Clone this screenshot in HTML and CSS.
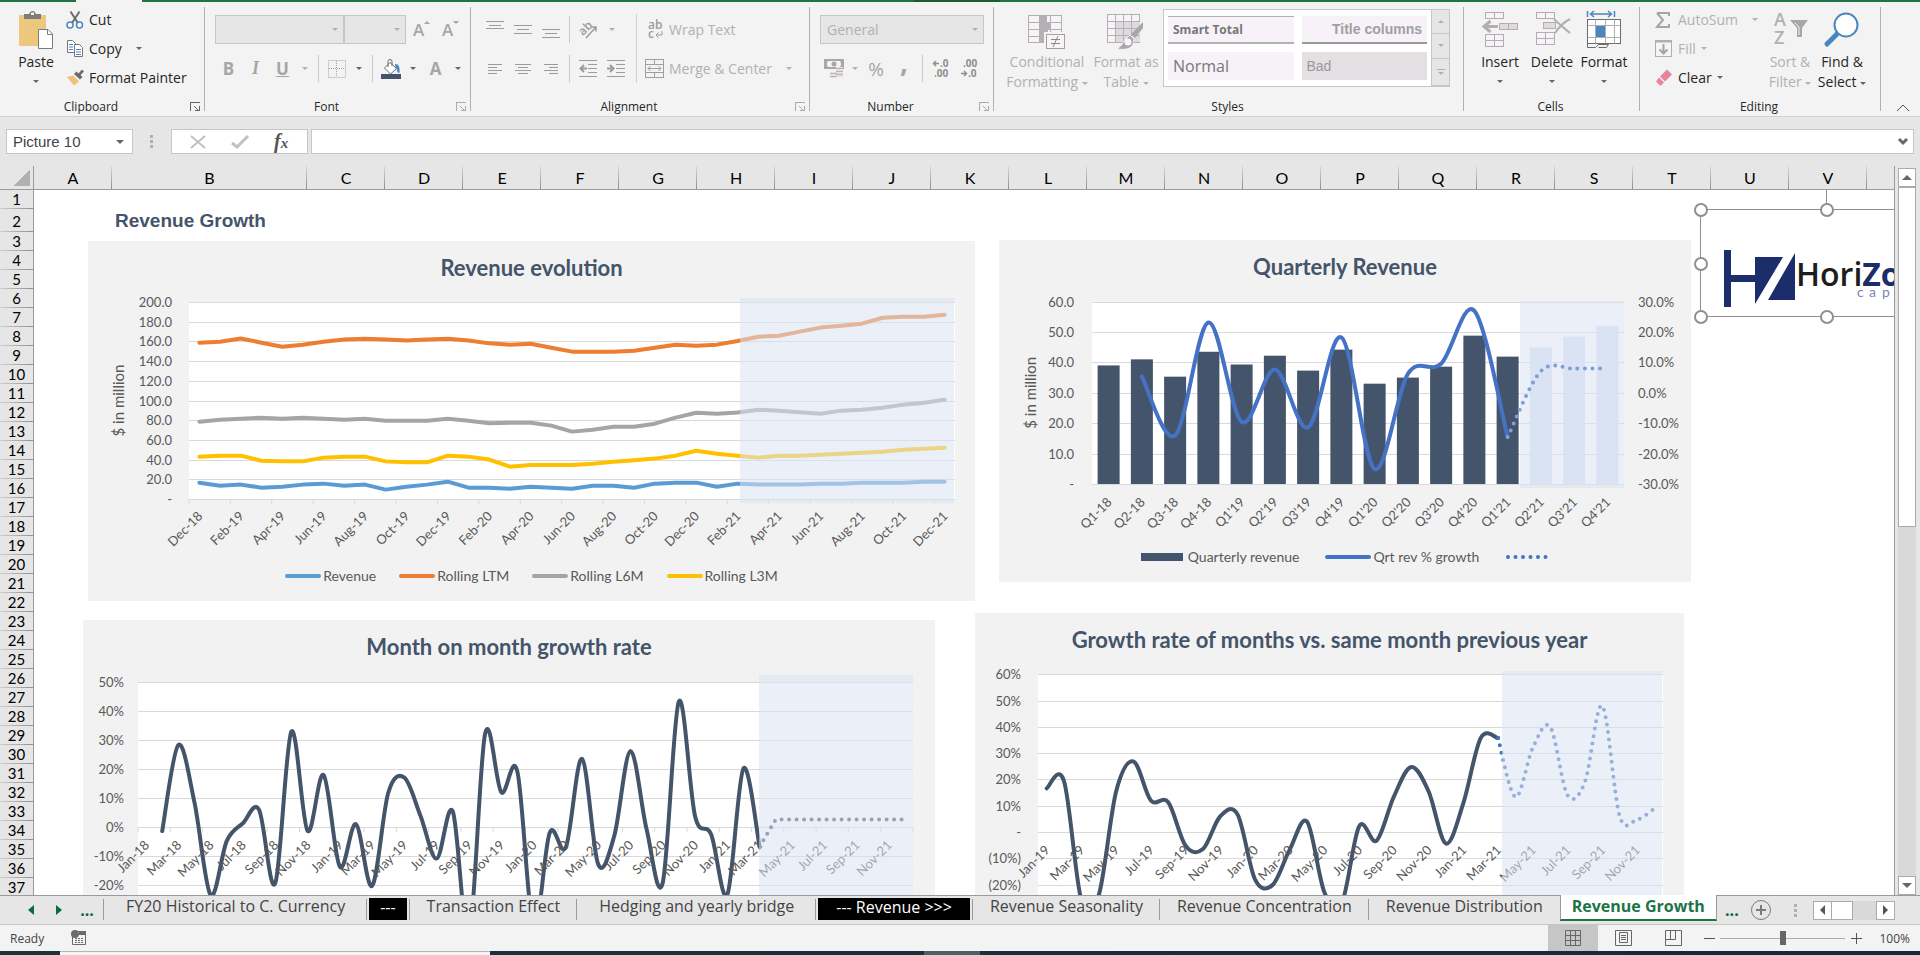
FILE: index.html
```html
<!DOCTYPE html>
<html lang="en">
<head>
    <meta charset="UTF-8">
    <meta name="viewport" content="width=device-width, initial-scale=1.0">
    <title>Revenue Growth</title>
    <link rel="stylesheet" href="styles.css">
</head>
<body>
    <div class="top-strip"></div>

    <!-- Ribbon -->
    <div class="ribbon">
        <section class="group clipboard">
            <div class="group-body">
                <button class="big paste">
                    <svg width="36" height="42" viewBox="0 0 36 42"><rect x="1" y="7" width="27" height="31" rx="1" fill="#eec77f"/><path d="M6 11V6h5.500V5a3 3 0 0 1 3-2a3 3 0 0 1 3 2v1H23v5z" fill="#7b7b7b"/><rect x="13" y="4.500" width="3" height="2.500" fill="#f3f3f3"/><path d="M20.500 21.500h9.500l4.500 4.500v14.500h-14z" fill="#fff" stroke="#7b7b7b"/><path d="M29.500 21.500v5h5" fill="none" stroke="#7b7b7b"/></svg>
                    <span>Paste</span><i class="arrow"></i>
                </button>
                <div class="small-list">
                    <button><svg width="18" height="20" viewBox="0 0 18 20"><path d="M4.500 1.500L12 13M13.500 1.500L6 13" stroke="#6b6b6b" stroke-width="2"/><circle cx="4" cy="15" r="3" fill="#fff" stroke="#4a86c0" stroke-width="1.500"/><circle cx="13.500" cy="15" r="3" fill="#fff" stroke="#4a86c0" stroke-width="1.500"/></svg>Cut</button>
                    <button><svg width="18" height="20" viewBox="0 0 18 20"><path d="M1.500 1.500h5l3 3v9h-8z" fill="#fff" stroke="#777"/><path d="M3 5.500h4M3 8h4M3 10.500h4" stroke="#4a86c0"/><path d="M8.500 5.500h5l3 3v9h-8z" fill="#fff" stroke="#777"/><path d="M10 10.500h5M10 13h5M10 15.500h5" stroke="#4a86c0"/></svg>Copy<i class="arrow far"></i></button>
                    <button><svg width="18" height="20" viewBox="0 0 18 20"><path d="M1 9l6-1.500 6 6-5 4z" fill="#eec07a"/><path d="M8 6l2.500-2.500 2 2L16 1.500l2 2-3.500 3.500 2 2L14 11.500z" fill="#6b6b6b"/></svg>Format Painter</button>
                </div>
            </div>
            <div class="group-label">Clipboard<button class="launcher" aria-label="Clipboard options"></button></div>
        </section>

        <section class="group font off">
            <div class="group-body rows">
                <div class="row">
                    <label class="combo font-name"><select disabled aria-label="Font"><option></option></select></label>
                    <label class="combo font-size"><select disabled aria-label="Font size"><option></option></select></label>
                    <button class="tool grow" disabled aria-label="Increase font size">A<svg width="6" height="3"><path d="M0 3l3-3 3 3z" fill="#a6a6a6"/></svg></button>
                    <button class="tool grow" disabled aria-label="Decrease font size">A<svg width="6" height="3"><path d="M0 0l3 3 3-3z" fill="#a6a6a6"/></svg></button>
                </div>
                <div class="row">
                    <button class="tool bold" disabled>B</button>
                    <button class="tool italic" disabled>I</button>
                    <button class="tool under" disabled>U</button>
                    <i class="arrow"></i>
                    <span class="sep"></span>
                    <button class="tool" disabled aria-label="Borders"><svg width="18" height="18" viewBox="0 0 18 18" fill="none" stroke="#aaa2aa" stroke-dasharray="1 1"><rect x=".5" y=".5" width="17" height="17"/><path d="M8.500 1v16M1 8.500h16"/></svg></button>
                    <i class="arrow dark"></i>
                    <span class="sep"></span>
                    <button class="tool" aria-label="Fill color"><svg width="20" height="20" viewBox="0 0 20 20"><path d="M9 3.500l6.500 6-6 5.500-6-6z" fill="#fff" stroke="#6b6b6b"/><path d="M7 8V2.500a2 2 0 0 1 4 0V7" fill="none" stroke="#6b6b6b"/><path d="M14 5c4 0 5 3 4.500 9-3 0-2-4-4-6z" fill="#4a86c0"/><rect y="15" width="20" height="5" fill="#44546a"/></svg></button>
                    <i class="arrow dark"></i>
                    <button class="tool color" disabled>A</button>
                    <i class="arrow dark"></i>
                </div>
            </div>
            <div class="group-label">Font<button class="launcher" aria-label="Font options"></button></div>
        </section>

        <section class="group align off">
            <div class="group-body">
                <div class="rows">
                    <div class="row">
                        <button class="tool" disabled aria-label="Top align"><svg width="18" height="18" stroke="#9c9c9c"><path d="M0 .5h18M3 4.500h12M0 7.500h18"/></svg></button>
                        <button class="tool" disabled aria-label="Middle align"><svg width="18" height="18" stroke="#9c9c9c"><path d="M0 4.500h18M3 8.500h12M0 12.500h18"/></svg></button>
                        <button class="tool" disabled aria-label="Bottom align"><svg width="18" height="18" stroke="#9c9c9c"><path d="M0 8.500h18M3 12.500h12M0 16.500h18"/></svg></button>
                        <span class="sep"></span>
                        <button class="tool" disabled aria-label="Orientation"><svg width="20" height="20" viewBox="0 0 20 20"><text x="2" y="15" transform="rotate(-45 5 12)" font-size="12" font-weight="600" fill="#9c9c9c">ab</text><path d="M8 18L18 7M13.500 7H18v4.500" fill="none" stroke="#9c9c9c" stroke-width="1.500"/></svg></button>
                        <i class="arrow"></i>
                    </div>
                    <div class="row">
                        <button class="tool" disabled aria-label="Align left"><svg width="14" height="12" stroke="#9c9c9c"><path d="M0 1.500h14M0 4.500h9M0 7.500h14M0 10.500h9"/></svg></button>
                        <button class="tool" disabled aria-label="Center"><svg width="16" height="12" stroke="#9c9c9c"><path d="M0 1.500h16M3 4.500h10M0 7.500h16M3 10.500h10"/></svg></button>
                        <button class="tool" disabled aria-label="Align right"><svg width="14" height="12" stroke="#9c9c9c"><path d="M0 1.500h14M5 4.500h9M0 7.500h14M5 10.500h9"/></svg></button>
                        <span class="sep"></span>
                        <button class="tool" disabled aria-label="Decrease indent"><svg width="18" height="17" fill="none" stroke="#9c9c9c"><path d="M0 .5h18M9 4.500h9M9 8.500h9M9 12.500h9M0 16.500h18"/><path d="M8 8.500H2M5 5L1.500 8.500 5 12" stroke-width="2"/></svg></button>
                        <button class="tool" disabled aria-label="Increase indent"><svg width="18" height="17" fill="none" stroke="#9c9c9c"><path d="M0 .5h18M9 4.500h9M9 8.500h9M9 12.500h9M0 16.500h18"/><path d="M0 8.500H6M3 5L6.500 8.500 3 12" stroke-width="2"/></svg></button>
                    </div>
                </div>
                <div class="rows wrap">
                    <div class="row">
                        <button class="wide" disabled><svg width="20" height="20" viewBox="0 0 20 20"><g font-size="12" font-weight="600" fill="#9c9c9c"><text x="3" y="9">ab</text><text x="3" y="18">c</text></g><path d="M17 11v4h-6M13.500 12.500L11 15l2.500 2.500" fill="none" stroke="#9c9c9c"/></svg>Wrap Text</button>
                    </div>
                    <div class="row">
                        <button class="wide" disabled><svg width="20" height="20" viewBox="0 0 20 20" fill="none" stroke="#a39da3"><rect x=".5" y=".5" width="18" height="18"/><path d="M.5 5.500h18M.5 13.500h18M9.500 .5v5M9.500 13.500v5M3 9.500h13M5.500 7L3 9.500 5.500 12M13.500 7L16 9.500 13.500 12"/></svg>Merge &amp; Center<i class="arrow far"></i></button>
                    </div>
                </div>
            </div>
            <div class="group-label">Alignment<button class="launcher" aria-label="Alignment options"></button></div>
        </section>

        <section class="group number off">
            <div class="group-body rows">
                <div class="row">
                    <label class="combo format"><select disabled aria-label="Number format"><option>General</option></select></label>
                </div>
                <div class="row">
                    <button class="tool" disabled aria-label="Accounting format"><svg width="20" height="20" viewBox="0 0 20 20"><rect y="0" width="20" height="10" fill="#a9a5a9"/><path d="M3 5a6 5 0 0 1 1-3h12a6 5 0 0 1 1 3 6 5 0 0 1-1 3H4a6 5 0 0 1-1-3z" fill="#f3f3f3"/><circle cx="10" cy="5" r="2.500" fill="#a9a5a9"/><path d="M12 8h7v10h-7zM6 13h6v6H6z" fill="#e4dfe4"/><path d="M12 9.500h7M12 12.500h7M12 15.500h7M6 14.500h7M6 17.500h7" stroke="#b9b5b9"/></svg></button>
                    <i class="arrow"></i>
                    <button class="tool percent" disabled>%</button>
                    <button class="tool comma" disabled>,</button>
                    <span class="sep"></span>
                    <button class="tool" disabled aria-label="Increase decimal"><svg width="18" height="20" viewBox="0 0 18 20"><g font-size="10" fill="#8e8e8e"><text x="8" y="8">.0</text><text x="2" y="18">.00</text></g><path d="M7 4.500H2M4 2L1.500 4.500 4 7" fill="none" stroke="#8e8e8e" stroke-width="1.500"/></svg></button>
                    <button class="tool" disabled aria-label="Decrease decimal"><svg width="18" height="20" viewBox="0 0 18 20"><g font-size="10" fill="#8e8e8e"><text x="3" y="8">.00</text><text x="8" y="18">.0</text></g><path d="M1 14.500H6M4 12L6.500 14.500 4 17" fill="none" stroke="#8e8e8e" stroke-width="1.500"/></svg></button>
                </div>
            </div>
            <div class="group-label">Number<button class="launcher" aria-label="Number options"></button></div>
        </section>

        <section class="group styles">
            <div class="group-body">
                <button class="big cond" disabled>
                    <svg width="38" height="42" viewBox="0 0 38 42"><g stroke="#b3b0b3"><rect x=".5" y="7.500" width="33" height="27" fill="#f7f3f7"/><path d="M.5 14.500h33M.5 21.500h33M.5 28.500h33M11.500 7v27M22.500 7v27"/></g><path d="M11 7h8v7h-8zM11 15h12v6H11zM11 22h9v6h-9zM11 29h6v6h-6z" fill="#b3b0b3"/><rect x="17.500" y="25.500" width="20" height="16" fill="#f7f3f7" stroke="#f3f3f3" stroke-width="3"/><rect x="18.500" y="26.500" width="18" height="14" fill="#f7f3f7" stroke="#a39fa3"/><path d="M23 31.500h9M23 35.500h9M30 28l-5 11" stroke="#8b888b"/></svg>
                    <span>Conditional</span><span>Formatting <i class="arrow"></i></span>
                </button>
                <button class="big table" disabled>
                    <svg width="38" height="42" viewBox="0 0 38 42"><g stroke="#b3b0b3"><rect x=".5" y="6.500" width="32" height="28" fill="#f7f3f7"/><path d="M9 14h24v20H9z" fill="#dedade" stroke="none"/><path d="M.5 13.500h32M.5 20.500h32M.5 27.500h32M8.500 7v27M16.500 7v27M24.500 7v27"/></g><path d="M36 14v6L28 30l-4-4z" fill="#a9a6a9"/><path d="M27 31l-4-4-4 4c-3 2-3 6-9 10 8 1 17 1 17-10z" fill="#a9a6a9" stroke="#f3f3f3"/><circle cx="21" cy="34" r="3.500" fill="#f7f3f7"/></svg>
                    <span>Format as</span><span>Table <i class="arrow"></i></span>
                </button>
                <div class="gallery">
                    <div class="swatches">
                        <button class="smart" disabled>Smart Total</button>
                        <button class="title-col" disabled>Title columns</button>
                        <button class="normal" disabled>Normal</button>
                        <button class="bad" disabled>Bad</button>
                    </div>
                    <div class="gallery-nav">
                        <button disabled aria-label="Scroll up"><i class="arrow up"></i></button>
                        <button disabled aria-label="Scroll down"><i class="arrow"></i></button>
                        <button class="more" disabled aria-label="More styles"><svg width="8" height="6"><path d="M0 .5h8" stroke="#b1b1b1"/><path d="M1 3h6l-3 3z" fill="#b1b1b1"/></svg></button>
                    </div>
                </div>
            </div>
            <div class="group-label">Styles</div>
        </section>

        <section class="group cells">
            <div class="group-body">
                <button class="big">
                    <svg width="38" height="42" viewBox="0 0 38 42"><g fill="#f7f3f7" stroke="#b3adb3"><rect x="4.500" y="4.500" width="18" height="6"/><path d="M13.500 4.500v6"/><rect x="18.500" y="15.500" width="18" height="6" fill="#dedade"/><path d="M27.500 15.500v6"/><rect x="4.500" y="26.500" width="18" height="12"/><path d="M13.500 26.500v12M4.500 32.500h18"/></g><path d="M17 18.500H4M9.500 13L3 18.500 9.500 24" fill="none" stroke="#b0b0b0" stroke-width="3"/></svg>
                    <span>Insert</span><i class="arrow"></i>
                </button>
                <button class="big">
                    <svg width="38" height="42" viewBox="0 0 38 42"><g fill="#f7f3f7" stroke="#b3adb3"><rect x="3.500" y="4.500" width="18" height="6"/><path d="M12.500 4.500v6"/><rect x="10.500" y="14.500" width="12" height="6" fill="#dedade"/><rect x="3.500" y="24.500" width="18" height="12"/><path d="M12.500 24.500v12M3.500 30.500h18"/></g><path d="M21 11c5 5 10 9 16 14M37 11c-6 3-11 8-15 14" fill="none" stroke="#b0b0b0" stroke-width="2"/></svg>
                    <span>Delete</span><i class="arrow"></i>
                </button>
                <button class="big">
                    <svg width="38" height="42" viewBox="0 0 38 42"><path d="M2.500 3v6M29.500 3v6M6 6h20M9 3L5.500 6 9 9M23 3l3.500 3L23 9" fill="none" stroke="#4a86c0" stroke-width="1.500"/><rect x="2.500" y="11.500" width="33" height="24" fill="#fff" stroke="#6b6b6b"/><path d="M2.500 17.500h33M2.500 29.500h33M10.500 11.500v24M20.500 11.500v24M29.500 11.500v24" stroke="#b0b0b0"/><rect x="11" y="18" width="9" height="11" fill="#4a86c0"/><path d="M2.500 35.500v4h8l3-3h10l-2 3h-8" fill="none" stroke="#6b6b6b"/></svg>
                    <span>Format</span><i class="arrow"></i>
                </button>
            </div>
            <div class="group-label">Cells</div>
        </section>

        <section class="group editing">
            <div class="group-body">
                <div class="small-list">
                    <button disabled><svg width="18" height="20" viewBox="0 0 18 20"><path d="M2 3h12v3M14 14v3H2l6-7-6-7" fill="none" stroke="#a5a5a5" stroke-width="2"/></svg>AutoSum<i class="arrow far"></i></button>
                    <button disabled><svg width="18" height="20" viewBox="0 0 18 20"><rect x=".5" y="1.500" width="16" height="16" fill="#f7f3f7" stroke="#b0b0b0"/><path d="M0 2.500h17" stroke="#b0b0b0" stroke-width="2"/><path d="M8.500 5v9M4.500 10.500l4 4 4-4" fill="none" stroke="#a5a5a5" stroke-width="2"/></svg>Fill<i class="arrow near"></i></button>
                    <button><svg width="18" height="20" viewBox="0 0 18 20"><path d="M12 1.500l5 5-7 7-5-5z" fill="#e8859a"/><path d="M4 9.500l5 5-3 3h-1l-4-4z" fill="#e8859a"/></svg>Clear<i class="arrow near"></i></button>
                </div>
                <button class="big" disabled>
                    <svg width="38" height="42" viewBox="0 0 38 42"><g font-size="18" font-weight="600" fill="#b3b0b3"><text x="3" y="18">A</text><text x="3" y="36">Z</text></g><path d="M19 12h18l-6 8v9h-5v-9z" fill="#a9a6a9"/><path d="M24 15l4 4v8" fill="none" stroke="#f3f3f3"/></svg>
                    <span>Sort &amp;</span><span>Filter <i class="arrow"></i></span>
                </button>
                <button class="big">
                    <svg width="38" height="42" viewBox="0 0 38 42"><path d="M14 26L4 36" stroke="#4a86c0" stroke-width="5" stroke-linecap="round"/><circle cx="23" cy="17" r="11.500" fill="#fff" stroke="#4a86c0" stroke-width="2"/></svg>
                    <span>Find &amp;</span><span>Select <i class="arrow"></i></span>
                </button>
            </div>
            <div class="group-label">Editing</div>
        </section>
        <button class="collapse" aria-label="Collapse the ribbon"><svg width="14" height="8" fill="none" stroke="#555"><path d="M1 7l6-6 6 6"/></svg></button>
    </div>

    <!-- Formula bar -->
    <div class="formula-bar">
        <label class="name-box"><input type="text" value="Picture 10" aria-label="Name box"><i class="arrow"></i></label>
        <span class="dots"></span>
        <div class="fx">
            <button disabled aria-label="Cancel"><svg width="16" height="14" stroke="#c0c0c0" stroke-width="2"><path d="M1 1l14 12M15 1L1 13"/></svg></button>
            <button disabled aria-label="Enter"><svg width="18" height="14" fill="none" stroke="#c0c0c0" stroke-width="3"><path d="M1 8l5 4L17 1"/></svg></button>
            <button class="fx-btn" aria-label="Insert function">f<small>x</small></button>
        </div>
        <label class="formula"><input type="text" aria-label="Formula"><svg width="10" height="7" fill="none" stroke="#666" stroke-width="3"><path d="M1 1l4 4 4-4"/></svg></label>
    </div>

    <!-- Worksheet -->
    <main class="workbook">
        <div class="sheet">
            <div class="corner"></div>
            <div class="col-heads" id="cols"></div>
            <div class="row-heads" id="rows"></div>
            <div class="canvas">
                <h1>Revenue Growth</h1>
                <figure class="chart evolution">
                    <figcaption>Revenue evolution</figcaption>
                    <svg id="evolution"></svg>
                    <div class="legend">
                        <span><i class="line blue"></i>Revenue</span>
                        <span><i class="line orange"></i>Rolling LTM</span>
                        <span><i class="line gray"></i>Rolling L6M</span>
                        <span><i class="line yellow"></i>Rolling L3M</span>
                    </div>
                </figure>
                <figure class="chart quarterly">
                    <figcaption>Quarterly Revenue</figcaption>
                    <svg id="quarterly"></svg>
                    <div class="legend">
                        <span><i class="block"></i>Quarterly revenue</span>
                        <span><i class="line royal"></i>Qrt rev % growth</span>
                        <span><svg width="44" height="6"><path d="M3 3h40" stroke="#4472c4" stroke-width="4" stroke-linecap="round" stroke-dasharray="0 7.5"/></svg></span>
                    </div>
                </figure>
                <figure class="chart monthly">
                    <figcaption>Month on month growth rate</figcaption>
                    <svg id="monthly"></svg>
                </figure>
                <figure class="chart yearly">
                    <figcaption>Growth rate of months vs. same month previous year</figcaption>
                    <svg id="yearly"></svg>
                </figure>
                <!-- selected picture with its handles -->
                <div class="picture">
                    <svg width="260" height="140" viewBox="0 0 260 140">
                        <path d="M134.500 0v20M8.500 19.500h250v107H8.500z" fill="none" stroke="#8f8f8f"/>
                        <g fill="#1c2d6c"><path d="M32 60h7v25h24v7H39v25h-7zM63 67h28L63 114zM103 63v47H76z"/></g>
                        <text class="logo-name" x="104" y="96">Hori<tspan>Zon</tspan></text>
                        <text class="logo-sub" x="165 177 190 203 213 222 235" y="107">capital</text>
                        <g fill="#fff" stroke="#8f8f8f" stroke-width="2"><circle cx="9" cy="20" r="6"/><circle cx="135" cy="20" r="6"/><circle cx="9" cy="74" r="6"/><circle cx="9" cy="127" r="6"/><circle cx="135" cy="127" r="6"/></g>
                    </svg>
                </div>
            </div>
        </div>
        <div class="vscroll">
            <button aria-label="Scroll up"><i class="arrow up"></i></button>
            <div class="track"><div class="thumb"></div></div>
            <button aria-label="Scroll down"><i class="arrow"></i></button>
        </div>
    </main>

    <!-- Sheet tabs -->
    <nav class="tabs">
        <div class="tab-nav">
            <button aria-label="Previous sheet"><svg width="6" height="10"><path d="M6 0v10L0 5z" fill="#0b6b3a"/></svg></button>
            <button aria-label="Next sheet"><svg width="6" height="10"><path d="M0 0v10l6-5z" fill="#0b6b3a"/></svg></button>
            <button class="ellipsis">...</button>
        </div>
        <a href="#">FY20 Historical to C. Currency</a>
        <a href="#" class="black"><b>---</b></a>
        <a href="#">Transaction Effect</a>
        <a href="#">Hedging and yearly bridge</a>
        <a href="#" class="black section"><b>--- Revenue &gt;&gt;&gt;</b></a>
        <a href="#">Revenue Seasonality</a>
        <a href="#">Revenue Concentration</a>
        <a href="#" class="last">Revenue Distribution</a>
        <a href="#" class="active">Revenue Growth</a>
        <button class="ellipsis">...</button>
        <button class="add" aria-label="New sheet"><svg width="20" height="20" fill="none" stroke="#7b7b7b"><circle cx="10" cy="10" r="9.500"/><path d="M5 10h10M10 5v10" stroke-width="2"/></svg></button>
        <span class="dots"></span>
        <div class="hscroll">
            <button aria-label="Scroll left"><svg width="5" height="10"><path d="M5 0v10L0 5z" fill="#555"/></svg></button>
            <div class="thumb"></div>
            <button aria-label="Scroll right"><svg width="5" height="10"><path d="M0 0v10l5-5z" fill="#555"/></svg></button>
        </div>
    </nav>

    <!-- Status bar -->
    <footer class="status">
        <span>Ready</span>
        <button class="macro" aria-label="Record macro"><svg width="16" height="16" viewBox="0 0 16 16"><path d="M1.500 5v9.500h13V1.500H6" fill="none" stroke="#6b6b6b"/><path d="M8 1h7v4H8z" fill="#6b6b6b"/><circle cx="4" cy="4" r="4" fill="#6b6b6b"/><path d="M4 8.500h9M4 10.500h9M4 12.500h9" stroke="#6b6b6b" stroke-dasharray="2 1"/></svg></button>
        <div class="views">
            <button class="on" aria-label="Normal view"><svg width="16" height="16" fill="none" stroke="#666"><path d="M.5 .5h15v15H.5zM.5 5.500h15M.5 10.500h15M5.500 .5v15M10.500 .5v15"/></svg></button>
            <button aria-label="Page layout"><svg width="17" height="16" fill="none" stroke="#666"><path d="M.5 .5h16v15H.5zM4.500 2.500h8v10h-8zM6 5.500h5M6 7.500h5M6 9.500h5"/></svg></button>
            <button aria-label="Page break preview"><svg width="17" height="16" fill="none" stroke="#666"><path d="M.5 .5h16v15H.5zM5.500 .5v9M.5 9.500h10V.5"/></svg></button>
        </div>
        <button class="zoom-btn" aria-label="Zoom out"><svg width="11" height="11" stroke="#555"><path d="M0 5.500h11"/></svg></button>
        <input class="zoom" type="range" min="0" max="100" value="50" aria-label="Zoom">
        <button class="zoom-btn" aria-label="Zoom in"><svg width="11" height="11" stroke="#555"><path d="M0 5.500h11M5.500 0v11"/></svg></button>
        <span class="percent-label">100%</span>
    </footer>
    <div class="taskbar"><i class="a"></i><i class="b"></i><i class="c"></i><i class="d"></i></div>

    <script src="charts.js"></script>
</body>
</html>
```
FILE: charts.js
```js
// Row and column headings
const cols = document.getElementById('cols');
'ABCDEFGHIJKLMNOPQRSTUVW'.split('').forEach((letter) => {
    const div = document.createElement('div');
    div.textContent = letter === 'W' ? '' : letter;
    cols.appendChild(div);
});
const rows = document.getElementById('rows');
for (let i = 1; i <= 37; i++) {
    const div = document.createElement('div');
    div.textContent = i;
    rows.appendChild(div);
}

const MONTHS = ['Jan', 'Feb', 'Mar', 'Apr', 'May', 'Jun', 'Jul', 'Aug', 'Sep', 'Oct', 'Nov', 'Dec'];

// Every second month, starting at the given month and year
function monthLabels(start, year, count) {
    const out = [];
    for (let i = 0; i < count; i++) {
        const m = start + i;
        out.push(i % 2 ? '' : MONTHS[m % 12] + '-' + (year + Math.floor(m / 12)));
    }
    return out;
}

function add(svg, name, attrs, text) {
    const el = document.createElementNS('http://www.w3.org/2000/svg', name);
    for (const key in attrs) el.setAttribute(key, attrs[key]);
    if (text !== undefined) el.textContent = text;
    svg.appendChild(el);
}

function linePath(pts) {
    return 'M' + pts.map((p) => p.join(' ')).join('L');
}

function smoothPath(pts) {
    let d = 'M' + pts[0].join(' ');
    for (let i = 0; i < pts.length - 1; i++) {
        const p0 = pts[i - 1] || pts[i];
        const p1 = pts[i];
        const p2 = pts[i + 1];
        const p3 = pts[i + 2] || p2;
        d += `C${p1[0] + (p2[0] - p0[0]) / 6} ${p1[1] + (p2[1] - p0[1]) / 6} ` +
             `${p2[0] - (p3[0] - p1[0]) / 6} ${p2[1] - (p3[1] - p1[1]) / 6} ${p2[0]} ${p2[1]}`;
    }
    return d;
}

function drawChart(id, o) {
    const svg = document.getElementById(id);
    const count = o.labels.length;
    const step = (o.right - o.left) / count;
    const x = (i) => o.left + (i + 0.5) * step;
    const y = (v) => o.zero - v * o.unit;

    add(svg, 'rect', { x: o.left, y: y(o.max), width: o.right - o.left, height: y(o.min) - y(o.max), fill: '#fff' });
    o.ticks.forEach((t) => {
        const ty = Math.round(y(t[0])) + 0.5;
        add(svg, 'path', { d: `M${o.left} ${ty}H${o.right}`, stroke: '#d9d9d9' });
        add(svg, 'text', { x: o.labelX, y: ty + 4, 'text-anchor': 'end' }, t[1]);
        if (t[2]) add(svg, 'text', { x: o.right + 14, y: ty + 4 }, t[2]);
    });
    if (o.tickMarks) {
        for (let i = 0; i <= count; i += 2) {
            add(svg, 'path', { d: `M${o.left + i * step} ${o.zero}v5`, stroke: '#d9d9d9' });
        }
    }
    (o.bars || []).forEach((v, i) => {
        if (i < 13) add(svg, 'rect', { x: x(i) - 11, y: y(v), width: 22, height: o.zero - y(v), fill: '#44546a' });
    });
    o.series.forEach((s) => {
        const scale = s.scale || y;
        const pts = s.data.map((v, i) => [x(i + (s.from || 0)), scale(v)]);
        add(svg, 'path', {
            d: s.straight ? linePath(pts) : smoothPath(pts),
            fill: 'none', stroke: s.color, 'stroke-width': 4,
            'stroke-linecap': 'round', 'stroke-linejoin': 'round',
            'stroke-dasharray': s.dotted ? '0 7.5' : 'none'
        });
    });
    o.labels.forEach((label, i) => {
        const lx = x(i) + 4;
        if (label) add(svg, 'text', { x: lx, y: o.labelY, 'text-anchor': 'end', transform: `rotate(-45 ${lx} ${o.labelY})` }, label);
    });
    // forecast period
    add(svg, 'rect', { x: o.shade[0], y: o.shade[1], width: o.shade[2], height: o.shade[3], fill: '#dae3f3', 'fill-opacity': 0.55 });
    (o.bars || []).forEach((v, i) => {
        if (i >= 13) add(svg, 'rect', { x: x(i) - 11, y: y(v), width: 22, height: o.zero - y(v), fill: '#dae3f3' });
    });
    (o.over || []).forEach((s) => {
        const pts = s.data.map((v, i) => [x(i + s.from), s.scale(v)]);
        add(svg, 'path', {
            d: smoothPath(pts), fill: 'none', stroke: s.color, 'stroke-width': 4,
            'stroke-linecap': 'round', 'stroke-dasharray': '0 7.5'
        });
    });
    if (o.axisTitle) {
        const ay = (y(o.max) + y(o.min)) / 2;
        add(svg, 'text', { class: 'axis-title', x: o.axisX, y: ay, 'text-anchor': 'middle', transform: `rotate(-90 ${o.axisX} ${ay})` }, o.axisTitle);
    }
}

drawChart('evolution', {
    left: 101, right: 867, zero: 258, unit: 0.985, min: 0, max: 200,
    labelX: 84, labelY: 276, axisX: 36, axisTitle: '$ in million', tickMarks: true,
    labels: monthLabels(11, 18, 37),
    ticks: [200, 180, 160, 140, 120, 100, 80, 60, 40, 20, 0].map((v) => [v, v ? v.toFixed(1) : '-']),
    shade: [652, 57, 214, 205],
    series: [
        { color: '#5b9bd5', straight: true, data: [16.6, 13.5, 14.6, 11.5, 12.5, 14.6, 15.6, 13.5, 14.6, 9.5, 12.5, 14.6, 17.6, 11.5, 11.5, 10.5, 12.5, 11.5, 10.5, 13.5, 13.5, 11.5, 15.6, 16.6, 16.6, 12.5, 15.6, 14.6, 14.6, 14.6, 15.6, 15.6, 16.6, 16.6, 16.6, 17.6, 17.6] },
        { color: '#ed7d31', straight: true, data: [158.7, 159.7, 163, 158.7, 154.6, 156.7, 159.7, 162, 162.8, 162, 161, 162, 162.8, 161, 158, 156.7, 157.7, 153.6, 149.6, 149.6, 149.6, 150.6, 153.6, 156.7, 155.7, 156.7, 160.4, 164.8, 165.8, 169.9, 174, 176, 178, 184, 185, 185, 187] },
        { color: '#a5a5a5', straight: true, data: [78.5, 80.5, 81.5, 82.6, 81.5, 82.6, 81.5, 80.5, 81.5, 79.5, 79.5, 79.5, 81.5, 79.5, 76.8, 77.5, 77.5, 74.5, 68.4, 70.4, 73.4, 73.4, 76.5, 82.6, 87.6, 86.6, 87.8, 90.7, 89.7, 88, 86.6, 89.7, 90.7, 92.7, 95.8, 97.8, 100.8] },
        { color: '#ffc000', straight: true, data: [43, 44, 44, 38.9, 38.2, 38.2, 42, 43, 43, 38.2, 37.2, 37.2, 44, 43, 40, 32.8, 34.5, 34.5, 34.5, 35.9, 37.9, 39.3, 41, 44, 49, 46, 44, 42, 44, 44, 45, 46, 47, 48, 50, 51, 52] }
    ]
});

const growth = (v) => 153 - v * 3.04;
drawChart('quarterly', {
    left: 93, right: 625, zero: 244, unit: 3.04, min: 0, max: 60,
    labelX: 75, labelY: 263, axisX: 37, axisTitle: '$ in million',
    labels: ['Q1-18', 'Q2-18', 'Q3-18', 'Q4-18', "Q1'19", "Q2'19", "Q3'19", "Q4'19", "Q1'20", "Q2'20", "Q3'20", "Q4'20", "Q1'21", "Q2'21", "Q3'21", "Q4'21"],
    ticks: [60, 50, 40, 30, 20, 10, 0].map((v) => [v, v ? v.toFixed(1) : '-', (v - 30).toFixed(1) + '%']),
    bars: [39, 41, 35.3, 43.5, 39.3, 42.2, 37.3, 44.2, 33, 35, 38.6, 48.8, 41.9, 44.9, 48.5, 52],
    shade: [521, 61, 104, 187],
    series: [
        { color: '#4472c4', from: 1, scale: growth, data: [5.4, -14, 23.2, -9.5, 7.7, -11.3, 18.3, -25, 6.3, 9.6, 27, -14.5] }
    ],
    over: [
        { color: '#7f9fd8', from: 12, scale: growth, data: [-14.5, 7.2, 8, 8] }
    ]
});

drawChart('monthly', {
    left: 55, right: 830, zero: 207, unit: 2.9, min: -30, max: 50,
    labelX: 41, labelY: 226, tickMarks: true,
    labels: monthLabels(0, 18, 48),
    ticks: [50, 40, 30, 20, 10, 0, -10, -20].map((v) => [v, v + '%']),
    shade: [676, 55, 154, 240],
    series: [
        { color: '#44546a', from: 1, data: [-1.4, 28.3, 8.4, -23.5, -4.8, 1.3, 5.9, -19.4, 32.9, -1.3, 17.9, -13.7, 1, -20.3, 11.8, 17, 3.8, -10.9, 5.3, -38, 32.2, 12, 19, -35, -2, -7, 23.5, -12.8, -3, 26.2, -0.8, -19.2, 43.3, 3.8, -2.6, -23.3, 20.2, -6.8] },
        { color: '#44546a', from: 38, straight: true, dotted: true, data: [-6.8, 2.6, 2.6, 2.6, 2.6, 2.6, 2.6, 2.6, 2.6, 2.6] }
    ]
});

drawChart('yearly', {
    left: 63, right: 688, zero: 219, unit: 2.63, min: -30, max: 60,
    labelX: 46, labelY: 238,
    labels: monthLabels(0, 19, 36),
    ticks: [60, 50, 40, 30, 20, 10, 0, -10, -20].map((v) => [v, v > 0 ? v + '%' : v < 0 ? '(' + -v + '%)' : '-']),
    shade: [527, 58, 160, 240],
    series: [
        { color: '#44546a', data: [16.6, 19.3, -26, -24, 15.4, 26.8, 12, 11.3, -5.2, -6.5, 6, 6.6, -18, -20.2, -6.7, 3.9, -23, -27, 2.2, -3.3, 13.5, 24.7, 15.4, -4.4, 11, 35.7, 35.7] },
        { color: '#4472c4', from: 26, dotted: true, data: [35.7, 13.3, 32, 40, 14, 19, 48, 6.2, 4.7, 8.9] }
    ]
});
```
FILE: styles.css
```css
/* General Styling */
* {
    box-sizing: border-box;
}

body, html {
    margin: 0;
    padding: 0;
    height: 100%;
}

body {
    display: flex;
    flex-direction: column;
    height: 100vh;
    overflow: hidden;
    background: #e6e6e6;
    color: #262626;
    font-family: "Open Sans", "Noto Sans", sans-serif;
    font-size: 14px;
}

button, input, select {
    margin: 0;
    padding: 0;
    border: none;
    background: none;
    color: inherit;
    font: inherit;
}

button {
    display: flex;
    align-items: center;
    justify-content: center;
    flex-shrink: 0;
}

svg {
    display: block;
    flex-shrink: 0;
    overflow: visible;
}

.arrow {
    display: inline-block;
    flex-shrink: 0;
    border: 3px solid transparent;
    border-top-color: #666;
    border-bottom: none;
    vertical-align: middle;
}

.arrow.up {
    border-top: none;
    border-bottom: 3px solid #666;
}

.dots {
    width: 3px;
    height: 13px;
    background: repeating-linear-gradient(#b0b0b0 0 3px, transparent 3px 5px);
}

.top-strip {
    height: 2px;
    flex-shrink: 0;
    background: linear-gradient(90deg, #217346 76px, #f3f3f3 76px 142px, #217346 142px 914px, #1a5c38 914px 1000px, #217346 1000px);
}

/* Ribbon */
.ribbon {
    display: flex;
    height: 115px;
    flex-shrink: 0;
    background: #f3f3f3;
    border-bottom: 1px solid #d2d2d2;
}

.group {
    display: flex;
    flex-direction: column;
    flex-shrink: 0;
    background: linear-gradient(#b1b1b1, #b1b1b1) right 5px / 1px 104px no-repeat;
}

.clipboard { width: 205px; }
.font { width: 266px; }
.align { width: 339px; }
.number { width: 184px; }
.styles { width: 470px; }
.cells { width: 176px; }
.editing { width: 241px; }

.group-body {
    display: flex;
    height: 94px;
}

.group-label {
    display: flex;
    align-items: center;
    justify-content: center;
    height: 20px;
    padding-right: 3px;
    font-size: 12px;
}

.group-label:has(.launcher) {
    padding-right: 0;
}

.launcher {
    width: 10px;
    height: 9px;
    margin-left: auto;
    margin-right: 5px;
    border-top: 1px solid #666;
    border-left: 1px solid #666;
    background: linear-gradient(225deg, transparent 46%, #666 46% 54%, transparent 54%) 3px 3px / 5px 5px no-repeat, linear-gradient(#666, #666) right bottom / 5px 1px no-repeat, linear-gradient(#666, #666) right bottom / 1px 5px no-repeat;
}

.group-label:has(.launcher)::before {
    content: "";
    margin-right: auto;
    margin-left: -8px;
}

.off .launcher {
    opacity: 0.5;
}

button:disabled {
    color: #b1b1b1;
}

button:disabled .arrow,
.off .arrow {
    border-top-color: #b1b1b1;
}

.off .arrow.dark {
    border-top-color: #666;
}

button:disabled .arrow.up {
    border-bottom-color: #b1b1b1;
}

.big {
    flex-direction: column;
    justify-content: flex-start;
    width: 52px;
    padding-top: 6px;
    line-height: 20px;
    white-space: nowrap;
}

.big svg {
    margin-bottom: 2px;
}

.big > .arrow {
    margin-top: 8px;
}

.paste {
    width: 60px;
    margin-left: 6px;
}

.cond {
    width: 84px;
    margin-left: 11px;
}

.table {
    width: 74px;
}

.small-list {
    display: flex;
    flex-direction: column;
    padding-top: 3px;
}

.small-list button {
    justify-content: flex-start;
    height: 29px;
}

.small-list svg {
    margin-right: 5px;
}

.editing .small-list {
    width: 124px;
    padding-left: 15px;
}

.arrow.far {
    margin-left: 14px;
}

.arrow.near {
    margin-left: 5px;
}

.rows {
    display: flex;
    flex-direction: column;
    gap: 10px;
    padding: 13px 0 0 10px;
}

.row {
    display: flex;
    align-items: center;
    height: 29px;
}

.tool {
    width: 28px;
    height: 28px;
    font-size: 17px;
    font-weight: 700;
}

.tool:disabled {
    color: #a6a6a6;
}

.row .arrow {
    margin: 0 7px;
}

.row .wide .arrow {
    margin: 0 0 0 14px;
}

.number .row .arrow {
    margin: 0 4px;
}

.sep {
    width: 1px;
    height: 27px;
    margin: 0 4px;
    background: #c8c8c8;
}

.italic {
    font-family: "Liberation Serif", serif;
    font-style: italic;
    font-size: 18px;
}

.under {
    text-decoration: underline;
}

.font .tool {
    width: 27px;
}

.font .row .arrow {
    margin: 0 6px;
}

.font .grow {
    margin-left: 2px;
    font-weight: 600;
}

.grow svg {
    align-self: flex-start;
    margin-top: 5px;
}

.percent {
    font-weight: 400;
    font-size: 19px;
}

.comma {
    font-size: 28px;
    line-height: 28px;
    padding-bottom: 16px;
}

.combo {
    display: flex;
    align-items: center;
    height: 29px;
    border: 1px solid #c6c6c6;
    background: #e6e6e6;
}

.combo select {
    flex: 1;
    min-width: 0;
    appearance: none;
    padding-left: 6px;
    color: #b1b1b1;
    opacity: 1;
}

.combo::after {
    content: "";
    margin-right: 5px;
    border: 3px solid transparent;
    border-top-color: #b1b1b1;
    border-bottom: none;
}

.font-name { width: 129px; }
.font-size { width: 62px; }
.format { width: 164px; }

.wrap {
    padding-left: 9px;
    margin-left: 6px;
    background: linear-gradient(#d0d0d0, #d0d0d0) left 12px / 1px 69px no-repeat;
}

.wide svg {
    margin-right: 4px;
}

.gallery {
    display: flex;
    width: 287px;
    height: 78px;
    margin-top: 7px;
    border: 1px solid #c6c6c6;
    background: #fff;
}

.swatches {
    display: grid;
    flex: 1;
    grid-template-columns: 1fr 1fr;
    grid-template-rows: 28px 28px;
    gap: 8px;
    padding: 6px 4px;
}

.swatches button {
    justify-content: flex-start;
    padding-left: 5px;
    background: #f6f2f8;
    color: #777;
    font-size: 16px;
}

.swatches .smart {
    border-top: 1px solid #b1b1b1;
    border-bottom: 2px solid #b1b1b1;
    font-size: 12px;
    font-weight: 700;
}

.swatches .title-col {
    justify-content: flex-end;
    padding-right: 5px;
    border-bottom: 2px solid #999;
    color: #a0a0a0;
    font-family: "Liberation Sans", sans-serif;
    font-size: 14px;
    font-weight: 700;
}

.swatches .bad {
    background: #e3dfe3;
    color: #999;
    font-family: "Liberation Sans", sans-serif;
    font-size: 14px;
}

.gallery-nav {
    display: grid;
    width: 18px;
}

.gallery-nav button {
    border-left: 1px solid #c6c6c6;
    border-bottom: 1px solid #c6c6c6;
    background: #e6e6e6;
}

.cells .group-body {
    padding-left: 10px;
}

.collapse {
    align-self: flex-end;
    width: 14px;
    height: 16px;
    margin-left: auto;
    margin-right: 10px;
}

/* Formula bar */
.formula-bar {
    display: flex;
    align-items: center;
    flex-shrink: 0;
    height: 49px;
    padding: 0 6px;
}

.name-box, .fx, .formula {
    display: flex;
    align-items: center;
    height: 25px;
    border: 1px solid #c6c6c6;
    background: #fff;
}

.name-box {
    width: 127px;
    padding: 0 8px 0 6px;
    color: #444;
    font-family: "Liberation Sans", sans-serif;
    font-size: 15px;
}

.name-box .arrow {
    border-width: 4px;
    border-bottom: none;
}

.name-box input {
    flex: 1;
    min-width: 0;
}

.formula-bar .dots {
    margin: 0 18px 0 17px;
}

.fx {
    width: 137px;
    padding: 0 5px;
}

.fx button {
    flex: 1;
}

.fx-btn {
    color: #555;
    font: italic 700 20px "Liberation Serif", serif;
}

.fx-btn small {
    font-size: 15px;
    padding-top: 4px;
}

.formula {
    flex: 1;
    margin-left: 3px;
    padding-right: 5px;
}

.formula input {
    flex: 1;
}

/* Worksheet */
.workbook {
    display: flex;
    flex: 1;
    min-height: 0;
}

.sheet {
    display: grid;
    flex: 1;
    grid-template-columns: 34px 1fr;
    grid-template-rows: 24px 1fr;
    min-width: 0;
    border-right: 1px solid #9b9b9b;
    overflow: hidden;
    font-family: Lato, sans-serif;
}

.corner {
    border-right: 1px solid #9b9b9b;
    border-bottom: 1px solid #9b9b9b;
    background: linear-gradient(135deg, transparent 50%, #b1b1b1 50%) 14px 4px / 16px 16px no-repeat;
}

.col-heads {
    display: flex;
    overflow: hidden;
    border-bottom: 1px solid #9b9b9b;
    color: #000;
    font-size: 16px;
    line-height: 24px;
    text-align: center;
}

.col-heads div {
    width: 78px;
    flex-shrink: 0;
    background: linear-gradient(#d8d8d8, #8f8f8f) right / 1px 100% no-repeat;
}

.col-heads div:nth-child(2) {
    width: 195px;
}

.row-heads {
    overflow: hidden;
    border-right: 1px solid #9b9b9b;
    color: #000;
    font-size: 15px;
    line-height: 19px;
    text-align: center;
}

.row-heads div {
    height: 19px;
    background: linear-gradient(90deg, #cfcfcf, #8f8f8f) bottom / 100% 1px no-repeat;
}

.row-heads div:nth-child(2) {
    height: 23px;
    line-height: 24px;
}

.canvas {
    position: relative;
    overflow: hidden;
    background: #fff;
}

.canvas h1 {
    margin: 20px 0 0 81px;
    color: #44546a;
    font: 700 19px/21px "Liberation Sans", sans-serif;
}

/* Charts lie freely over the cells */
.chart {
    position: absolute;
    display: grid;
    margin: 0;
    background: #f2f2f2;
}

.chart > * {
    grid-area: 1 / 1;
}

.chart > svg {
    width: 100%;
    height: 100%;
    overflow: hidden;
    fill: #595959;
    font-size: 13px;
}

.chart figcaption {
    padding-top: 13px;
    color: #44546a;
    font-size: 22px;
    font-weight: 700;
    line-height: 28px;
    text-align: center;
}

.chart .axis-title {
    font-size: 15px;
}

.evolution { left: 54px; top: 51px; width: 887px; height: 360px; }
.quarterly { left: 965px; top: 50px; width: 692px; height: 342px; }
.monthly { left: 49px; top: 430px; width: 852px; height: 360px; }
.yearly { left: 941px; top: 423px; width: 709px; height: 360px; }

.legend {
    display: flex;
    align-self: end;
    justify-content: center;
    gap: 23px;
    padding-bottom: 16px;
    color: #595959;
    font-size: 14px;
    line-height: 18px;
}

.legend span {
    display: flex;
    align-items: center;
    gap: 2px;
}

.quarterly .legend {
    gap: 26px;
}

.line {
    width: 36px;
    height: 4px;
    border-radius: 2px;
}

.blue { background: #5b9bd5; }
.orange { background: #ed7d31; }
.gray { background: #a5a5a5; }
.yellow { background: #ffc000; }
.royal { width: 46px; background: #4472c4; }

.block {
    width: 42px;
    height: 8px;
    margin-right: 3px;
    background: #44546a;
}

.picture {
    position: absolute;
    left: 1658px;
    top: 0;
}

.logo-name {
    fill: #1d1d1b;
    font-family: "Open Sans", sans-serif;
    font-size: 32px;
    font-weight: 600;
}

.logo-name tspan {
    fill: #1c2d6c;
    font-weight: 700;
}

.logo-sub {
    fill: #7c86b4;
    font-size: 14px;
}

/* Scroll bars */
.vscroll {
    display: flex;
    flex-direction: column;
    width: 25px;
    padding: 2px 4px 0 3px;
}

.vscroll button, .hscroll button {
    height: 19px;
    border: 1px solid #ababab;
    background: #fff;
}

.vscroll .arrow {
    border-width: 5px;
    border-bottom: none;
}

.vscroll .arrow.up {
    border-width: 5px;
    border-top: none;
    border-bottom: 5px solid #666;
}

.track {
    flex: 1;
    background: #d9d9d9;
}

.vscroll .thumb {
    height: 340px;
    border: 1px solid #ababab;
    background: #fff;
}

/* Sheet tabs */
.tabs {
    display: flex;
    flex-shrink: 0;
    height: 30px;
    border-top: 1px solid #9b9b9b;
    border-bottom: 1px solid #c6c6c6;
    color: #444;
    font-size: 16px;
}

.tabs a {
    display: flex;
    padding: 0 17px;
    color: #444;
    line-height: 21px;
    text-decoration: none;
    white-space: nowrap;
    background: linear-gradient(#9b9b9b, #9b9b9b) right 3px / 1px 21px no-repeat;
}

.tabs a:has(+ .black) {
    padding: 0 22px;
}

.tab-nav {
    display: flex;
    width: 104px;
    padding-left: 17px;
    background: linear-gradient(#9b9b9b, #9b9b9b) right 3px / 1px 21px no-repeat;
}

.tab-nav button {
    width: 28px;
}

.ellipsis {
    color: #0b6b3a;
    font-weight: 700;
}

.tabs .black {
    padding: 2px 3px 4px 2px;
    color: #fff;
}

.black b {
    padding: 0 11px;
    background: #000;
    font-weight: 400;
    line-height: 18px;
}

.section b {
    padding: 0 18px;
}

.tabs .last {
    background: none;
}

.tabs .active {
    height: 26px;
    margin-top: -1px;
    padding: 1px 11px 0;
    border: 1px solid #9b9b9b;
    border-top: none;
    border-bottom: 2px solid #217346;
    background: #fff;
    color: #217346;
    font-weight: 700;
}

.tabs > .ellipsis {
    width: 30px;
}

.add {
    width: 28px;
}

.tabs .dots {
    align-self: center;
    margin-left: auto;
}

.hscroll {
    display: flex;
    align-self: center;
    width: 82px;
    height: 19px;
    margin: 0 25px 0 16px;
    background: #d9d9d9;
}

.hscroll button {
    width: 19px;
}

.hscroll .thumb {
    width: 21px;
    margin-right: auto;
    border: 1px solid #ababab;
    border-left: none;
    background: #fff;
}

/* Status bar */
.status {
    display: flex;
    align-items: center;
    flex-shrink: 0;
    height: 26px;
    padding: 0 10px;
    background: #f3f3f3;
    color: #444;
    font-size: 12px;
}

.macro {
    margin-left: 27px;
}

.views {
    display: flex;
    align-self: stretch;
    margin-left: auto;
    margin-right: 5px;
}

.views button {
    width: 50px;
}

.views .on {
    background: #c6c6c6;
}

.zoom-btn {
    width: 12px;
}

.zoom {
    width: 125px;
    height: 14px;
    margin: 0 5px;
    appearance: none;
    background: linear-gradient(#ababab, #ababab) center / 100% 1px no-repeat;
}

.zoom::-webkit-slider-thumb {
    appearance: none;
    width: 6px;
    height: 14px;
    background: #666;
}

.percent-label {
    width: 48px;
    text-align: right;
}

.taskbar {
    display: flex;
    flex-shrink: 0;
    height: 4px;
    background: linear-gradient(90deg, #1b353b, #16283c);
}

.taskbar i {
    height: 4px;
}

.taskbar .a { width: 60px; }
.taskbar .b { width: 430px; border-top: 1px solid #b5b5b5; background: #f3f3f3; }
.taskbar .c { width: 434px; }
.taskbar .d { width: 56px; background: #4b6166; }
```
